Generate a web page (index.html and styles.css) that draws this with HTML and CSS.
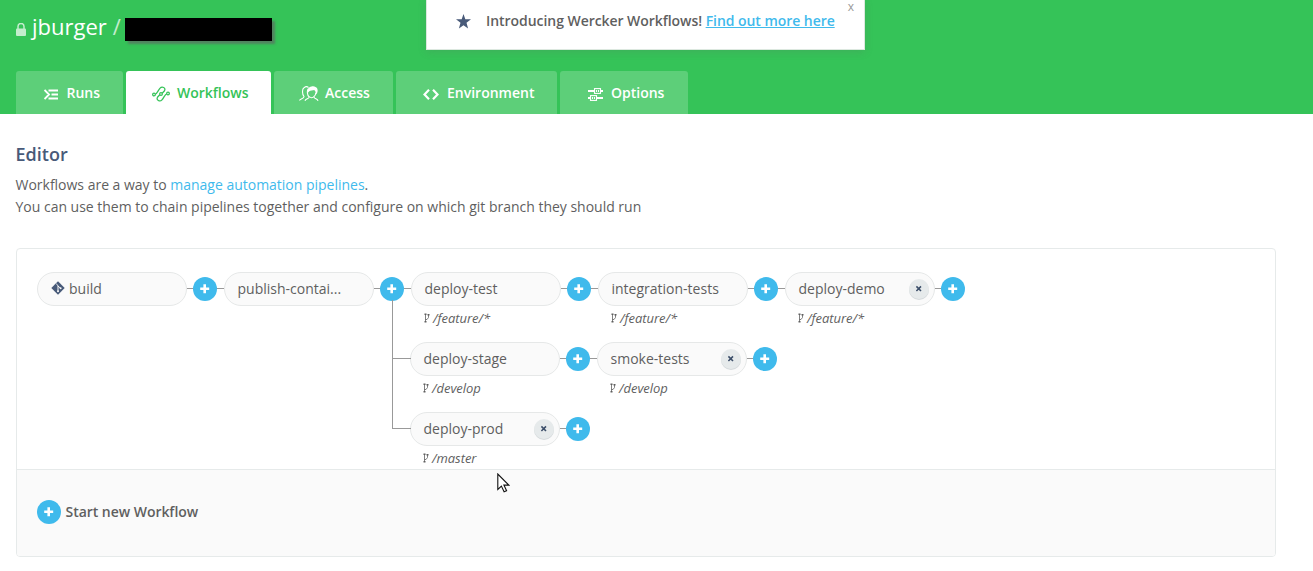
FILE: index.html
```
<!DOCTYPE html>
<html lang="en">
<head>
<meta charset="utf-8">
<title>Workflows</title>
<link rel="stylesheet" href="styles.css">
</head>
<body>
<svg class="defs" width="0" height="0">
  <symbol id="branch" viewBox="0 0 6 10"><path d="M1.500 1v8M1.500 6.500h1.500L4.500 4.500V2" fill="none" stroke="currentColor" stroke-width=".8"/><path d="M.5 .5h2v1.500h-2zM.5 8h2v1.500h-2zM3.500 1h2v1.500h-2z" fill="currentColor"/></symbol>
  <symbol id="plus" viewBox="0 0 24 24"><path d="M11.700 7.200v9M7.200 11.700h9" stroke="#fff" stroke-width="2.600"/></symbol>
  <symbol id="cross" viewBox="0 0 20 20"><path d="M7.400 7.400l4.600 4.600M12 7.400l-4.600 4.600" stroke="#3e506b" stroke-width="1.600"/></symbol>
</svg>
<header class="header">
  <div class="project">
    <svg class="lock" viewBox="0 0 10 13"><path d="M2 6V3.500a3 3 0 0 1 6 0V6" fill="none" stroke="currentColor" stroke-width="1.500"/><rect y="5.500" width="10" height="7.500" rx="1" fill="currentColor"/></svg>
    <span class="owner">jburger</span><span class="slash">/</span><span class="redacted"></span>
  </div>
  <nav class="tabs">
    <a class="tab runs"><svg viewBox="0 0 15 11"><path d="M.5 1L5 5.500.5 10M4.500 1.500H14M7.500 5.500H14M4.500 9.500H14" fill="none" stroke="currentColor" stroke-width="1.900"/></svg>Runs</a>
    <a class="tab workflows active"><svg viewBox="0 0 18 16"><g fill="none" stroke="currentColor" stroke-width="1.250"><circle cx="2" cy="8.500" r="1.350"/><circle cx="9" cy="8" r="1.350"/><circle cx="16" cy="7.500" r="1.350"/><path d="M3.300 8.200C5 8 6.200 4 8 2.200 10.200-.2 14 1.800 12.500 4.800L10.200 7.200M7.800 8.800L5.500 11.200C4 14.200 7.800 16.200 10 13.800c1.800-1.800 3-5.800 4.700-6"/></g></svg>Workflows</a>
    <a class="tab access"><svg viewBox="0 0 20 16"><g fill="none" stroke="currentColor" stroke-width="1.100"><path d="M.5 14.500c.5-2.200 4.500-1.500 4.500-4C3 8 3 3 5 1.800 6.500.3 8.500.5 9.500 1.500M6 14.800c.6-2.500 4-1.600 4.200-3.800-2-1.500-2.400-6-1-8.300M15 11c.2 2.200 3.500 1.500 4 3.800M10.200 10.500c1.500 1.700 3.500 1.700 4.800 0 1.300-1 1.800-2.500 1.800-4"/></g><path d="M8.700 7C8 3.500 9.500 1 12.500.6c1.500-.5 3-.3 4 .5 2.500.9 2.800 4.400 1 7.400-.5-1.500-.7-3-2.200-4.500-1.500.5-4 .3-5 1.200z" fill="currentColor"/></svg>Access</a>
    <a class="tab environment"><svg viewBox="0 0 16 11"><path d="M6 .8L1.500 5.500 6 10.200M10 .8l4.500 4.700L10 10.200" fill="none" stroke="currentColor" stroke-width="2.200"/></svg>Environment</a>
    <a class="tab options"><svg viewBox="0 0 15 13"><g fill="none" stroke="currentColor" stroke-width="1.100"><path d="M0 3h6M13 3h2M0 10h3M9 10h6" stroke-width="1.800"/><rect x="6.500" y=".6" width="6" height="4.800"/><rect x="2.500" y="7.600" width="6" height="4.800"/><path d="M8.500 2v2M10.500 2v2M4.500 9v2M6.500 9v2"/></g></svg>Options</a>
  </nav>
  <aside class="notice">
    <svg class="star" viewBox="0 0 14 14"><path d="M7 0l1.700 5H14L9.800 8.200l1.500 5.300L7 10.400l-4.300 3.100 1.500-5.300L0 5h5.300z" fill="#485a79"/></svg>
    <span class="message">Introducing Wercker Workflows! <a>Find out more here</a></span>
    <span class="close">x</span>
  </aside>
</header>
<main class="content">
  <h1>Editor</h1>
  <p>Workflows are a way to <a>manage automation pipelines</a>.<br>You can use them to chain pipelines together and configure on which git branch they should run</p>
  <section class="panel">
    <div class="chain canvas">
      <div class="node"><svg class="git" viewBox="0 0 14 14"><path d="M7 .3L13.700 7 7 13.700.3 7z" fill="#485a79"/><path d="M5.200 2.800L7 4.600v5.600M7 5l2.600 2.300" fill="none" stroke="#fafafa" stroke-width="1"/><circle cx="7" cy="10.200" r="1" fill="#fafafa"/><circle cx="9.600" cy="7.300" r="1" fill="#fafafa"/></svg>build</div>
      <div class="link"><svg class="add"><use href="#plus"/></svg></div>
      <div class="node">publish-contai...</div>
      <div class="link"><svg class="add"><use href="#plus"/></svg></div>
      <div class="branches">
        <div class="chain">
          <div class="step"><div class="node">deploy-test</div><div class="ref"><svg><use href="#branch"/></svg>/feature/*</div></div>
          <div class="link"><svg class="add"><use href="#plus"/></svg></div>
          <div class="step"><div class="node">integration-tests</div><div class="ref"><svg><use href="#branch"/></svg>/feature/*</div></div>
          <div class="link"><svg class="add"><use href="#plus"/></svg></div>
          <div class="step"><div class="node">deploy-demo<svg class="remove"><use href="#cross"/></svg></div><div class="ref"><svg><use href="#branch"/></svg>/feature/*</div></div>
          <div class="link last"><svg class="add"><use href="#plus"/></svg></div>
        </div>
        <div class="chain fork first">
          <div class="step"><div class="node">deploy-stage</div><div class="ref"><svg><use href="#branch"/></svg>/develop</div></div>
          <div class="link"><svg class="add"><use href="#plus"/></svg></div>
          <div class="step"><div class="node">smoke-tests<svg class="remove"><use href="#cross"/></svg></div><div class="ref"><svg><use href="#branch"/></svg>/develop</div></div>
          <div class="link last"><svg class="add"><use href="#plus"/></svg></div>
        </div>
        <div class="chain fork">
          <div class="step"><div class="node">deploy-prod<svg class="remove"><use href="#cross"/></svg></div><div class="ref"><svg><use href="#branch"/></svg>/master</div></div>
          <div class="link last"><svg class="add"><use href="#plus"/></svg></div>
        </div>
      </div>
    </div>
    <div class="start"><svg class="add"><use href="#plus"/></svg>Start new Workflow</div>
  </section>
</main>
<svg class="cursor" viewBox="0 0 13 20"><path d="M.8 1v15.500l3.600-3.400 2.700 5.700 2.500-1.100-2.700-5.600h4.900z" fill="#fff" stroke="#111" stroke-width="1.100"/></svg>
</body>
</html>
```
FILE: styles.css
```
* { box-sizing: border-box; }
body {
  margin: 0;
  background: #fff;
  color: #5f5f5f;
  font: 14px/22px "Open Sans", "Noto Sans", sans-serif;
}
.defs { position: absolute; }
.header {
  position: relative;
  display: flex;
  flex-direction: column;
  justify-content: space-between;
  height: 114px;
  padding: 11px 16px 0;
  background: #35c358;
}
.project {
  display: flex;
  align-items: center;
  height: 30px;
  color: #fff;
  font-size: 22px;
}
.lock { width: 10px; height: 13px; margin: 7px 6px 0 0; opacity: .7; }
.slash { margin: 0 4px 0 6px; opacity: .7; }
.redacted {
  width: 147px;
  height: 23px;
  margin-top: 7px;
  background: #000;
  box-shadow: 3px 3px 2px rgba(100, 90, 100, .6);
}
.tabs { display: flex; gap: 3px; }
.tab {
  display: flex;
  align-items: center;
  height: 43px;
  border-radius: 3px 3px 0 0;
  background: #5dcf79;
  color: #fff;
  font-weight: 600;
}
.tab svg { flex: none; margin-top: 3px; }
.tab.active { background: #fff; color: #35c358; }
.runs { width: 107px; padding-left: 28px; }
.runs svg { width: 15px; height: 11px; margin-right: 7.500px; }
.workflows { width: 145px; padding-left: 26px; }
.workflows svg { width: 18px; height: 16px; margin-right: 7px; }
.access { width: 119px; padding-left: 25px; }
.access svg { width: 20px; height: 16px; margin-right: 6px; }
.environment { width: 161px; padding-left: 27px; }
.environment svg { width: 16px; height: 11px; margin-right: 8px; }
.options { width: 128px; padding-left: 28px; }
.options svg { width: 15px; height: 13px; margin-right: 8px; }
.notice {
  position: absolute;
  top: 0;
  left: 426px;
  display: flex;
  width: 439px;
  height: 50px;
  padding: 10px 0 0 29px;
  border: 1px solid #dce8df;
  border-top: 0;
  background: #fff;
  box-shadow: 0 2px 8px rgba(100, 100, 100, .2);
  font-weight: 600;
}
.star { width: 15px; height: 15px; margin: 4px 15px 0 0; }
.message { letter-spacing: -.05px; }
.notice a { color: #3fbaec; text-decoration: underline; }
.close {
  position: absolute;
  top: -4px;
  right: 10px;
  color: #999;
  font-size: 12px;
  font-weight: 400;
}
.content { padding: 28px 16px 0; }
h1 {
  margin: 0 0 7px;
  color: #485a79;
  font-size: 18px;
  font-weight: 600;
  line-height: 25px;
  text-indent: -.5px;
}
p { margin: 0 0 0 -.5px; letter-spacing: -.01px; }
p a { color: #3fbaec; }
.panel {
  width: 1260px;
  height: 309px;
  margin-top: 30px;
  overflow: hidden;
  border: 1px solid #e6eaea;
  border-radius: 4px;
}
.chain { display: flex; align-items: flex-start; }
.canvas { height: 220px; padding: 23px 20px 0; }
.branches .chain { height: 70px; }
.node {
  display: flex;
  flex: none;
  align-items: center;
  width: 150px;
  height: 34px;
  padding: 0 5px 1px 12.500px;
  border: 1px solid #e6e8e8;
  border-radius: 17px;
  background: #fafafa;
}
.git { width: 14px; height: 14px; margin: -2px 4px 0 .5px; }
.remove {
  width: 20px;
  height: 20px;
  margin: 1px 0 0 auto;
  border-radius: 50%;
  background: #e6eaeb;
  box-shadow: 0 1px 0 #d5dadc;
}
.add {
  display: block;
  flex: none;
  width: 24px;
  height: 24px;
  border-radius: 50%;
  background: #3fbaec;
}
.link {
  width: 37px;
  height: 34px;
  padding: 5px 0 0 6px;
  background: linear-gradient(#999, #999) 0 16px / 100% 1px no-repeat;
}
.link.last { background-size: 12px 1px; }
.ref {
  display: flex;
  align-items: center;
  padding: 1px 0 0 13px;
  font-size: 13px;
  font-style: italic;
  letter-spacing: -.05px;
}
.ref svg { width: 6px; height: 10px; margin-right: 3px; }
.fork { position: relative; margin-left: -1px; }
.fork::before {
  content: "";
  position: absolute;
  right: 100%;
  bottom: 53px;
  width: 18px;
  height: 71px;
  margin-right: -1px;
  border: solid #999;
  border-width: 0 0 1px 1px;
}
.fork.first::before { height: 58px; }
.start {
  display: flex;
  align-items: center;
  gap: 4.500px;
  height: 87px;
  padding: 0 20px 2px;
  border-top: 1px solid #e6eaea;
  background: #fafafa;
  font-weight: 600;
  letter-spacing: -.04px;
}
.cursor {
  position: absolute;
  top: 473px;
  left: 497px;
  width: 13px;
  height: 20px;
}
```
